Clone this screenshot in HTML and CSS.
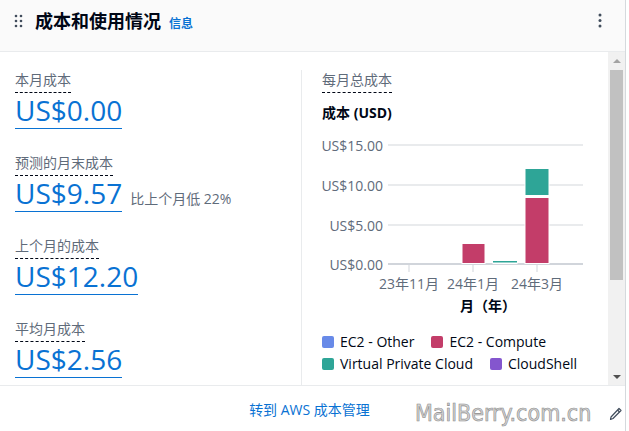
FILE: index.html
```html
<!DOCTYPE html>
<html lang="zh-CN">
<head>
    <meta charset="UTF-8">
    <meta name="viewport" content="width=device-width, initial-scale=1.0">
    <title>成本和使用情况</title>
    <link rel="stylesheet" href="styles.css">
</head>
<body>
    <div class="card">
        <div class="card-header">
            <svg class="drag-handle" width="9" height="14" viewBox="0 0 9 14">
                <circle cx="2" cy="2" r="1.3"/><circle cx="7" cy="2" r="1.3"/>
                <circle cx="2" cy="7" r="1.3"/><circle cx="7" cy="7" r="1.3"/>
                <circle cx="2" cy="12" r="1.3"/><circle cx="7" cy="12" r="1.3"/>
            </svg>
            <div class="title-group">
                <h2 class="card-title">成本和使用情况</h2>
                <a class="info-link" href="#">信息</a>
            </div>
            <svg class="menu-btn" width="4" height="16" viewBox="0 0 4 16">
                <circle cx="2" cy="2" r="1.5"/><circle cx="2" cy="7.5" r="1.5"/><circle cx="2" cy="13" r="1.5"/>
            </svg>
        </div>

        <div class="card-body">
            <div class="content">
                <div class="summary">
                    <div class="metric">
                        <div class="metric-label">本月成本</div>
                        <div class="metric-row"><a class="metric-amount" href="#">US$0.00</a></div>
                    </div>
                    <div class="metric">
                        <div class="metric-label">预测的月末成本</div>
                        <div class="metric-row">
                            <a class="metric-amount" href="#">US$9.57</a>
                            <span class="metric-note">比上个月低 22%</span>
                        </div>
                    </div>
                    <div class="metric">
                        <div class="metric-label">上个月的成本</div>
                        <div class="metric-row"><a class="metric-amount" href="#">US$12.20</a></div>
                    </div>
                    <div class="metric">
                        <div class="metric-label">平均月成本</div>
                        <div class="metric-row"><a class="metric-amount" href="#">US$2.56</a></div>
                    </div>
                </div>

                <div class="chart-panel">
                    <div class="metric-label">每月总成本</div>
                    <div class="chart-title">成本 (USD)</div>
                    <svg class="chart" width="268" height="190" viewBox="0 0 268 190">
                        <line class="grid" x1="66" y1="17" x2="261" y2="17"/>
                        <line class="grid" x1="66" y1="57" x2="261" y2="57"/>
                        <line class="grid" x1="66" y1="97" x2="261" y2="97"/>
                        <line class="axis" x1="66" y1="136" x2="261" y2="136"/>
                        <text class="y-label" x="61" y="17">US$15.00</text>
                        <text class="y-label" x="61" y="57">US$10.00</text>
                        <text class="y-label" x="61" y="97">US$5.00</text>
                        <text class="y-label" x="61" y="136">US$0.00</text>

                        <rect class="bar compute" x="140" y="115.5" width="23" height="20"/>
                        <rect class="bar compute" x="171" y="134.5" width="24" height="1"/>
                        <rect class="vpc" x="171" y="133" width="24" height="1.5"/>
                        <rect class="bar compute" x="203" y="69.5" width="24" height="66"/>
                        <rect class="bar vpc" x="203" y="40.5" width="24" height="27"/>

                        <line class="tick" x1="87" y1="137" x2="87" y2="144"/>
                        <line class="tick" x1="151" y1="137" x2="151" y2="144"/>
                        <line class="tick" x1="215" y1="137" x2="215" y2="144"/>
                        <text class="x-label" x="87" y="155">23年11月</text>
                        <text class="x-label" x="151" y="155">24年1月</text>
                        <text class="x-label" x="215" y="155">24年3月</text>
                        <text class="x-title" x="166" y="177">月（年）</text>
                    </svg>
                    <div class="legend">
                        <span class="legend-item"><i class="swatch other"></i>EC2 - Other</span>
                        <span class="legend-item"><i class="swatch compute"></i>EC2 - Compute</span>
                        <span class="legend-item"><i class="swatch vpc"></i>Virtual Private Cloud</span>
                        <span class="legend-item"><i class="swatch shell"></i>CloudShell</span>
                    </div>
                </div>
            </div>

            <div class="scrollbar">
                <span class="scroll-arrow"><i class="arrow-up"></i></span>
                <span class="scroll-thumb"></span>
                <span class="scroll-arrow bottom"><i class="arrow-down"></i></span>
            </div>
        </div>

        <div class="card-footer">
            <a href="#">转到 AWS 成本管理</a>
        </div>
    </div>

    <div class="watermark">MailBerry.com.cn</div>
    <svg class="resize-grip" width="13" height="14" viewBox="0 0 13 14">
        <path d="M10 1.5 L12 3.5 L4 11.5 L1.5 12.5 L2 10 Z" fill="none" stroke="#414d5c" stroke-width="1.2" stroke-linejoin="round"/>
        <path d="M8.5 3 L10.5 5" stroke="#414d5c" stroke-width="1.2"/>
    </svg>
</body>
</html>
```

FILE: styles.css
```css
body {
    margin: 0;
    background-color: #fff;
    font-family: "Open Sans", "Noto Sans CJK SC", sans-serif;
    color: #000716;
    overflow: hidden;
}

a {
    color: #0972d3;
    text-decoration: none;
}

.card {
    width: 625px;
    height: 431px;
    border-right: 1px solid #d5d9dd;
    display: flex;
    flex-direction: column;
    background-color: #fff;
}

/* header */
.card-header {
    height: 52px;
    box-sizing: border-box;
    padding: 10px 23px 0 14px;
    background-color: #fafafa;
    border-bottom: 1px solid #e9ebed;
    display: flex;
    align-items: flex-start;
    flex-shrink: 0;
}

.drag-handle {
    fill: #414d5c;
    margin-top: 4px;
    margin-right: 12px;
}

.title-group {
    display: flex;
    align-items: baseline;
}

.card-title {
    margin: 0;
    font-size: 18px;
    line-height: 22px;
    font-weight: 700;
}

.info-link {
    margin-left: 8px;
    font-size: 12px;
    font-weight: 700;
}

.menu-btn {
    fill: #414d5c;
    margin-left: auto;
    margin-top: 3px;
}

/* body */
.card-body {
    height: 333px;
    display: flex;
    overflow: hidden;
}

.content {
    flex: 1;
    display: flex;
    padding-top: 18px;
}

.summary {
    width: 301px;
    box-sizing: border-box;
    padding-left: 15px;
}

.metric {
    margin-bottom: 24px;
}

.metric-label {
    width: fit-content;
    font-size: 14px;
    line-height: 20px;
    color: #5f6b7a;
    padding-bottom: 2px;
    border-bottom: 1px dashed #000716;
}

.metric-row {
    display: flex;
    align-items: baseline;
}

.metric-amount {
    font-size: 28px;
    line-height: 35px;
    border-bottom: 1px solid #0972d3;
}

.metric-note {
    margin-left: 8px;
    font-size: 14px;
    color: #5f6b7a;
}

.chart-panel {
    flex: 1;
    border-left: 1px solid #e9ebed;
    padding-left: 20px;
}

.chart-title {
    margin-top: 10px;
    font-size: 14px;
    line-height: 20px;
    font-weight: 700;
}

.chart {
    display: block;
    margin-top: 5px;
    font-family: "Open Sans", "Noto Sans CJK SC", sans-serif;
    font-size: 14px;
}

.chart .grid {
    stroke: #e9ebed;
    stroke-width: 2;
}

.chart .axis {
    stroke: #d1d5db;
    stroke-width: 2;
}

.chart .tick {
    stroke: #d1d5db;
    stroke-width: 1;
}

.chart text {
    fill: #5f6b7a;
    dominant-baseline: central;
}

.chart .y-label {
    text-anchor: end;
}

.chart .x-label {
    text-anchor: middle;
}

.chart .x-title {
    text-anchor: middle;
    font-weight: 700;
    fill: #000716;
}

.chart .bar {
    stroke: #fff;
    stroke-width: 1;
}

.chart .compute { fill: #c33d69; }
.chart .vpc { fill: #2ea597; }

.legend {
    margin-top: 13px;
    display: flex;
    flex-wrap: wrap;
    column-gap: 17px;
    font-size: 14px;
    line-height: 22px;
}

.legend-item {
    display: flex;
    align-items: center;
}

.swatch {
    width: 12px;
    height: 12px;
    border-radius: 2px;
    margin-right: 6px;
}

.swatch.other { background-color: #688ae8; }
.swatch.compute { background-color: #c33d69; }
.swatch.vpc { background-color: #2ea597; }
.swatch.shell { background-color: #8456ce; }

/* fake scrollbar */
.scrollbar {
    width: 17px;
    background-color: #f1f1f1;
    display: flex;
    flex-direction: column;
}

.scroll-arrow {
    height: 17px;
    display: flex;
    align-items: center;
    justify-content: center;
}

.scroll-arrow.bottom {
    margin-top: auto;
}

.arrow-up {
    border-left: 4px solid transparent;
    border-right: 4px solid transparent;
    border-bottom: 4px solid #a3a3a3;
}

.arrow-down {
    border-left: 4px solid transparent;
    border-right: 4px solid transparent;
    border-top: 4px solid #505050;
}

.scroll-thumb {
    height: 210px;
    margin: 1px 2px 0;
    background-color: #c1c1c1;
}

/* footer */
.card-footer {
    flex: 1;
    border-top: 1px solid #e9ebed;
    display: flex;
    align-items: center;
    justify-content: center;
    padding-right: 6px;
    font-size: 14px;
}

.watermark {
    position: absolute;
    left: 415px;
    top: 402px;
    font-family: "DejaVu Sans Condensed", "DejaVu Sans", sans-serif;
    font-size: 23px;
    line-height: 23px;
    color: #d4d4d4;
    -webkit-text-stroke: 0.6px #8c8c8c;
}

.resize-grip {
    position: absolute;
    left: 609px;
    top: 407px;
}
```
